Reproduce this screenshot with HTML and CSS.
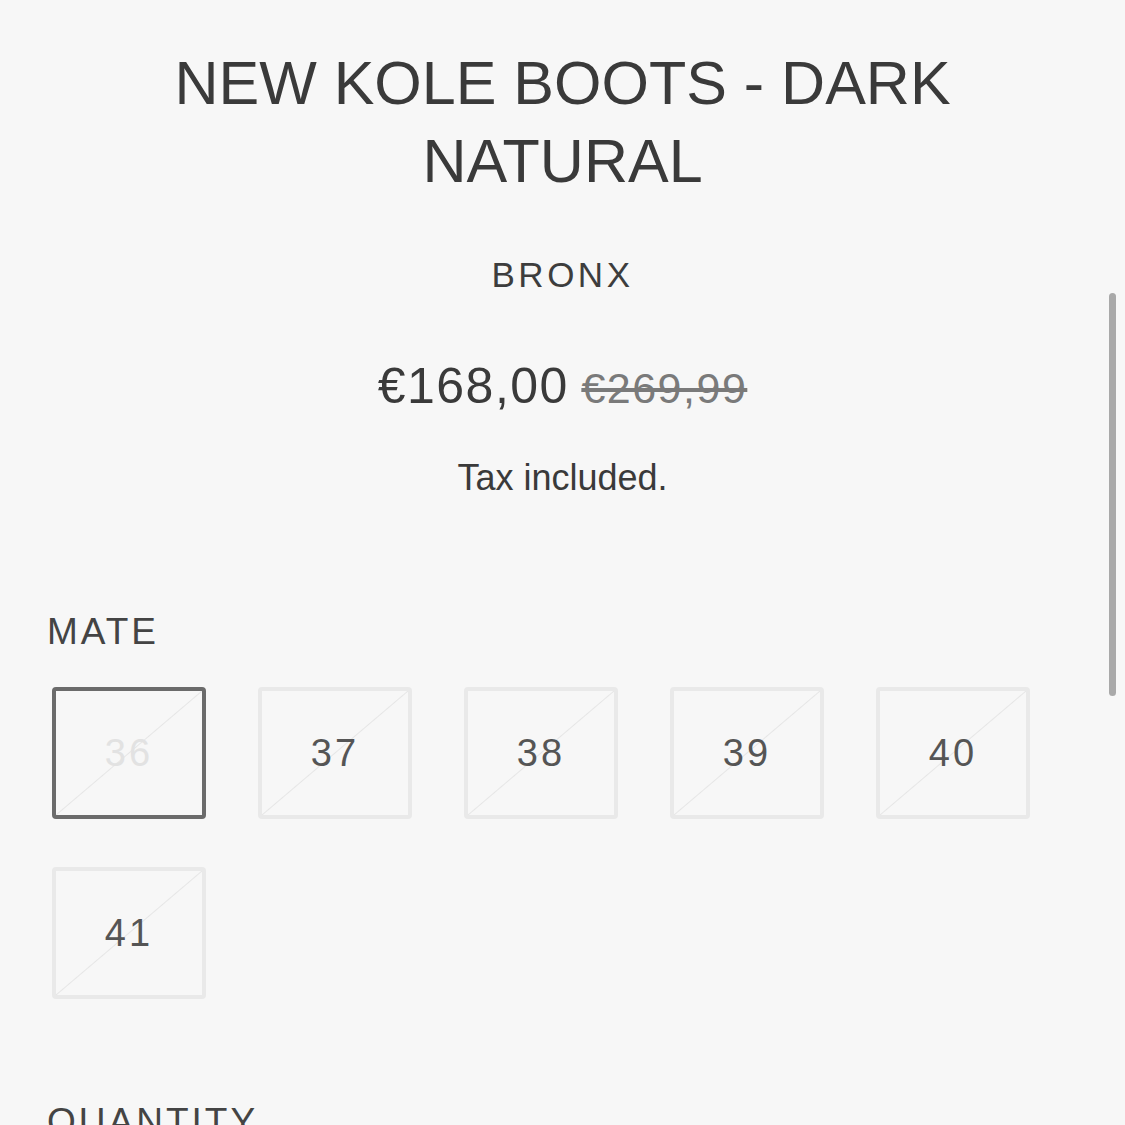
FILE: index.html
```html
<!DOCTYPE html>
<html lang="en">
<head>
    <meta charset="UTF-8">
    <meta name="viewport" content="width=device-width, initial-scale=1.0">
    <title>New Kole Boots - Dark Natural</title>
    <link rel="stylesheet" href="styles.css">
</head>
<body>
    <!-- Product header -->
    <section class="product-meta">
        <h1 class="product-title">NEW KOLE BOOTS - DARK NATURAL</h1>
        <p class="product-vendor">BRONX</p>
        <div class="product-price">
            <span class="price-sale">€168,00</span>
            <s class="price-compare">€269,99</s>
        </div>
        <p class="tax-note">Tax included.</p>
    </section>

    <!-- Size picker -->
    <section class="variant-picker">
        <h3 class="option-label">MATE</h3>
        <div class="swatches">
            <div class="swatch selected unavailable"><span>36</span></div>
            <div class="swatch unavailable"><span>37</span></div>
            <div class="swatch unavailable"><span>38</span></div>
            <div class="swatch unavailable"><span>39</span></div>
            <div class="swatch unavailable"><span>40</span></div>
            <div class="swatch unavailable"><span>41</span></div>
        </div>
    </section>

    <section class="quantity">
        <h3 class="option-label">QUANTITY</h3>
    </section>

    <div class="scroll-indicator"></div>
</body>
</html>
```

FILE: styles.css
```css
/* General page styling */
body {
    font-family: "Liberation Sans", Arial, sans-serif;
    background-color: #f7f7f7;
    color: #3d3d3d;
    margin: 0;
    padding: 0 47px;
    height: 1125px;
    overflow: hidden;
}

/* Title, vendor and price */
.product-meta {
    text-align: center;
    padding-top: 44px;
}

.product-title {
    font-size: 61px;
    font-weight: normal;
    line-height: 78px;
    margin: 0 110px;
    color: #3a3a3a;
}

.product-vendor {
    font-size: 35px;
    letter-spacing: 3.5px;
    margin: 45px 0 0;
    line-height: 60px;
}

.product-price {
    margin-top: 46px;
    line-height: 70px;
}

.price-sale {
    font-size: 50px;
    letter-spacing: 1.5px;
    color: #3a3a3a;
}

.price-compare {
    font-size: 43px;
    letter-spacing: 1.5px;
    color: #7a7a7a;
    margin-left: 8px;
}

.tax-note {
    font-size: 36px;
    margin: 20px 0 0;
    line-height: 50px;
    color: #3a3a3a;
}

/* Option labels */
.option-label {
    font-size: 37px;
    font-weight: normal;
    letter-spacing: 3px;
    margin: 0;
    line-height: 50px;
    color: #444;
}

.variant-picker {
    margin-top: 104px;
}

/* Size swatches */
.swatches {
    display: flex;
    flex-wrap: wrap;
    gap: 48px 52px;
    margin-top: 30px;
    padding-left: 5px;
}

.swatch {
    position: relative;
    width: 154px;
    height: 132px;
    box-sizing: border-box;
    border: 4px solid #e9e9e9;
    border-radius: 4px;
    display: flex;
    align-items: center;
    justify-content: center;
    font-size: 38px;
    letter-spacing: 3px;
    color: #555;
    overflow: hidden;
}

.swatch.unavailable::after {
    content: "";
    position: absolute;
    inset: 0;
    background: linear-gradient(to bottom right, transparent calc(50% - 1px), #e6e6e6 50%, transparent calc(50% + 1px));
}

.swatch.selected {
    border-color: #6b6b6b;
    color: #e2e2e2;
}

.swatch span {
    position: relative;
    z-index: 1;
}

.quantity {
    margin-top: 98px;
}

/* Overlay scroll bar */
.scroll-indicator {
    position: fixed;
    top: 293px;
    right: 9px;
    width: 7px;
    height: 403px;
    border-radius: 4px;
    background-color: #a9a9a9;
}
```
